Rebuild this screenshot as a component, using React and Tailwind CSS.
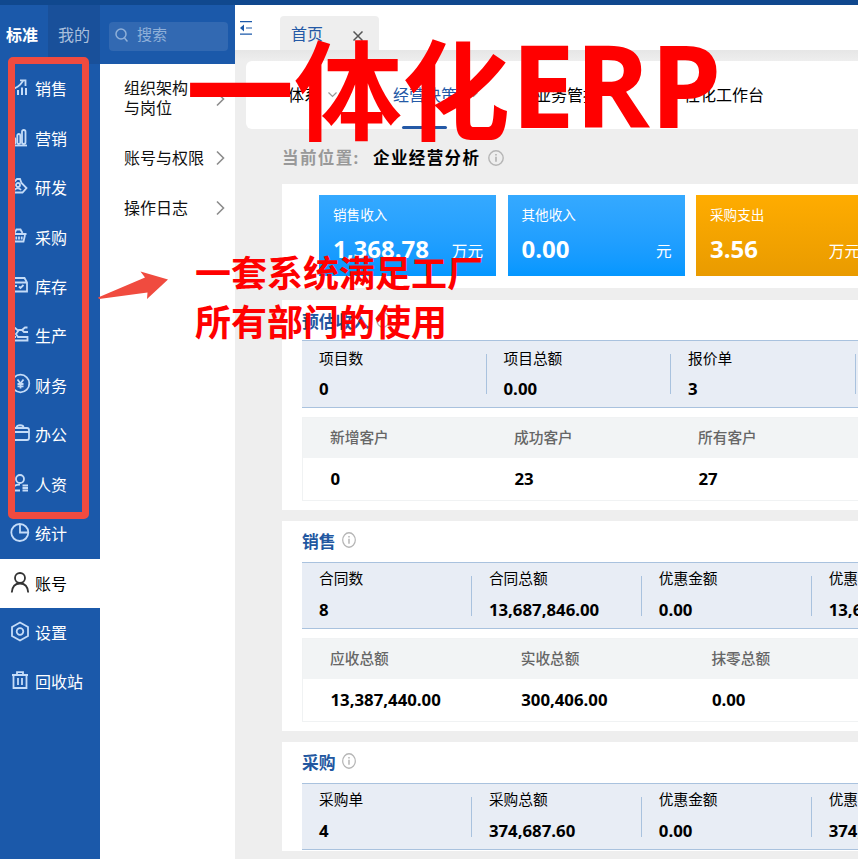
import React from 'react';

const icons = {
  sales: <><path d="M1 11c4-.5 8-3.500 11-8M9 2.300h5.500V8" /><path d="M3 17v-3M7 17v-5M11 17V9.500M15 17v-7" strokeWidth="2" /></>,
  market: <><path d="M0 17.500h16" /><rect x="2" y="10" width="2.500" height="6" rx="1.200" /><rect x="6.300" y="6" width="3" height="10" rx="1.500" /><rect x="11" y="2" width="3.500" height="14" rx="1.700" /></>,
  research: <><path d="M3 12V5l3-3h3l1.500 4 5 5-4 4.500H2" /><circle cx="7" cy="8" r="2" /><path d="M3 14c1-3 5-3.500 7-1" /></>,
  purchase: <><path d="M0 7h15.500M3.500 6l2-3.500h4l2 3.500M2 8l1.500 6.500h9L14 8" /><path d="M5.300 9.500v3M8 9.500v3M10.700 9.500v3" /></>,
  stock: <><path d="M1 6.500 3.500 2h10l2.500 4.500v9H1zM1 6.500h15" /><path d="m8 10.500 1.500 1.500 3-3M3.500 10H6" /></>,
  make: <><path d="M1 15.500h15.500V12H7L5 9l3-4h3l2 2h4M16.500 2.500H14l-3 2.500M1 3h3l3 2.500M1 12h4" /></>,
  finance: <><circle cx="9.500" cy="8.500" r="8.800" /><path d="m6.500 4.500 3 4 3-4M9.500 8.500v5M6.500 9h6M6.500 11.300h6" /></>,
  office: <><rect x="1" y="4" width="17" height="12" rx="2" /><path d="M5.500 3.500c0-3 7-3 7 0M1 8h17" /></>,
  people: <><circle cx="9" cy="5" r="4" /><path d="M1 16.500c.5-4 3-6 8-6M1 16.500h8M11.500 11.500H17M11.500 14H17M11.500 16.500H17" /></>,
  stats: <><circle cx="8.800" cy="9.500" r="8.500" /><path d="M9 1v8.500h8" /></>,
  account: <><circle cx="9" cy="5" r="5" /><path d="M.8 19.500c.4-6 3.200-9 8.200-9s7.800 3 8.200 9" /></>,
  settings: <><path d="m9 .5 8 4.500v9l-8 4.500L1 14V5z" /><circle cx="9" cy="9.500" r="3.300" /></>,
  trash: <><path d="M1 4h16M6 3.500V1.200h6v2.300M2.500 4v13h13V4M7 7v7M11 7v7" /></>,
};

const menu = [
  ['sales', '销售'], ['market', '营销'], ['research', '研发'], ['purchase', '采购'],
  ['stock', '库存'], ['make', '生产'], ['finance', '财务'], ['office', '办公'],
  ['people', '人资'], ['stats', '统计'], ['account', '账号'], ['settings', '设置'], ['trash', '回收站'],
];

function Sidebar() {
  return (
    <nav className="w-[100px] shrink-0 bg-[#1b59aa] pt-[0.5px] text-base text-white">
      {menu.map(([key, label]) => {
        const active = key === 'account';
        return (
          <div key={key} className={`flex h-[49.45px] items-center pl-[11px] ${active ? 'bg-white text-black' : ''}`}>
            <svg width="19" height="20" viewBox="0 0 19 20" fill="none" stroke="currentColor" strokeWidth="1.8" className={`-mt-0.5 shrink-0 overflow-visible ${active ? 'text-[#333]' : 'text-[#c5dcf8]'}`}>{icons[key]}</svg>
            <span className="ml-[5px] leading-6">{label}</span>
          </div>
        );
      })}
    </nav>
  );
}

function Chevron() {
  return (
    <svg width="9" height="16" viewBox="0 0 9 16" fill="none" stroke="#8c8c8c" strokeWidth="1.600" className="shrink-0">
      <path d="m1 1.500 6.500 6.500L1 14.500" />
    </svg>
  );
}

function Caret() {
  return (
    <svg width="9" height="6" viewBox="0 0 9 6" fill="none" stroke="#999" strokeWidth="1.200"><path d="m.5.500 4 4 4-4" /></svg>
  );
}

function Submenu() {
  return (
    <div className="w-[135px] bg-white pl-6 text-base text-[#111]">
      <div className="flex h-[69px] items-center justify-between pr-[10px]">
        <span className="leading-[19.5px]">组织架构<br />与岗位</span><Chevron />
      </div>
      <div className="flex h-[50px] items-center justify-between pr-[10px]"><span className="whitespace-nowrap">账号与权限</span><Chevron /></div>
      <div className="flex h-[50px] items-center justify-between pr-[10px]"><span>操作日志</span><Chevron /></div>
    </div>
  );
}

function Info({ className = '', w = 14 }) {
  return (
    <svg width={w} height="16" viewBox="0 0 16 16" preserveAspectRatio="none" fill="none" stroke="#b5b5b5" strokeWidth="1.400" className={className}>
      <circle cx="8" cy="8" r="7.200" /><path d="M8 6.700v5M8 4v1.500" strokeWidth="1.700" />
    </svg>
  );
}

function Kpi({ label, value, unit, orange }) {
  return (
    <div className={`flex h-[81px] w-[177px] shrink-0 flex-col bg-linear-to-b pl-[14px] pr-[13px] pt-[11px] text-white ${orange ? 'from-[#ffac00] to-[#e99b00]' : 'from-[#35a9ff] to-[#0497ff]'}`}>
      <div className="text-[13.6px] leading-[18px]">{label}</div>
      <div className="mt-[9px] flex items-center justify-between">
        <span className="text-2xl leading-8 font-bold">{value}</span>
        <span className="mt-[3px] text-[15.600px] leading-6">{unit}</span>
      </div>
    </div>
  );
}

function Metrics({ items, wide }) {
  return (
    <div className={`flex border-y border-[#a9c2de] bg-[#e8edf5] ${wide ? 'h-[68px]' : 'h-[67px]'}`}>
      {items.map(([label, value], i) => (
        <div key={i} className={`flex shrink-0 items-center ${wide ? 'w-[184.5px]' : 'w-[169.9px]'}`}>
          <div className={`flex h-[65px] flex-1 flex-col pl-[17px] whitespace-nowrap text-black ${wide ? 'pt-[5px]' : 'pt-1'}`}>
            <span className="text-[14.7px] leading-[22px]">{label}</span>
            <span className={`text-[16.8px] leading-[22px] font-bold ${wide ? 'mt-[9px]' : 'mt-[10px]'}`}>{value}</span>
          </div>
          <div className="h-10 w-px bg-[#a9c2de]" />
        </div>
      ))}
    </div>
  );
}

function Totals({ items, wide }) {
  return (
    <div className="mt-[9px] mr-[-1px] border border-[#f0f2f3]">
      <div className="flex h-10 items-center bg-[#f2f4f5] pl-[27px]">
        {items.map(([label]) => (
          <span key={label} className={`-mt-px shrink-0 text-[14.7px] font-medium text-[#666] ${wide ? 'w-[184px]' : 'w-[190.7px]'}`}>{label}</span>
        ))}
      </div>
      <div className="flex h-[42px] items-center pl-[27.500px]">
        {items.map(([label, value]) => (
          <span key={label} className={`shrink-0 text-[16.8px] font-bold text-black ${wide ? 'w-[184px]' : 'w-[190.7px]'}`}>{value}</span>
        ))}
      </div>
    </div>
  );
}

function Section({ title, metrics, totals, wide, className = '' }) {
  return (
    <section className={`shrink-0 overflow-hidden bg-white pl-5 ${className}`}>
      <h2 className={`flex items-center text-[16.800px] font-bold text-[#2257a0] ${wide ? 'h-10 pt-[3px]' : 'h-[41px] pt-px'}`}>
        {title}<Info className="-mt-1 ml-[6.500px]" />
      </h2>
      <Metrics items={metrics} wide={wide} />
      {totals && <Totals items={totals} wide={wide} />}
    </section>
  );
}

function Main() {
  return (
    <main className="flex min-w-0 flex-1 flex-col overflow-hidden bg-[#eee]">
      <div className="flex h-[45px] shrink-0 items-end bg-white">
        <svg width="12" height="14" viewBox="0 0 12 14" fill="none" stroke="#1b59aa" strokeWidth="1.200" className="mb-[15px] ml-[5px]">
          <path d="M0 .7h12M6 7h6M0 13.200h12" /><path d="m0 7 4-3.500v7z" fill="#1b59aa" stroke="none" />
        </svg>
        <div className="ml-7 flex h-[34px] w-[99px] items-center justify-between rounded-t-sm bg-[#eee] pt-px pr-4 pl-[11px] text-base text-[#2459a6]">
          首页
          <svg width="10" height="10" viewBox="0 0 10 10" stroke="#555" strokeWidth="1.500" className="mt-1"><path d="m.5.500 9 9M9.500.500l-9 9" /></svg>
        </div>
      </div>
      <div className="h-[11px] shrink-0 bg-linear-to-b from-[#e6e6e6] to-[#eee]" />
      <div className="ml-[11px] flex h-[68px] shrink-0 rounded-l-md bg-white pl-[42px] text-base whitespace-nowrap text-black">
        <div className="flex w-[105px] items-center gap-2">体系<Caret /></div>
        <div className="flex w-[142px] flex-col text-[#2459a6]">
          <div className="flex h-[65px] items-center gap-3 pt-[3px]">经营决策<Caret /></div>
          <div className="ml-[9px] h-[3px] w-[45px] rounded-full bg-[#2459a6]" />
        </div>
        <div className="flex w-[133px] items-center gap-2">业务管控<Caret /></div>
        <div className="flex items-center">个性化工作台</div>
      </div>
      <div className="flex h-[55px] shrink-0 items-center pt-[3px] pl-[47px] text-[16.500px] font-bold tracking-[1.4px] whitespace-nowrap">
        <span className="w-[91px] text-[#999]">当前位置:</span>
        <span className="text-black">企业经营分析</span>
        <Info w={16} className="ml-2" />
      </div>
      <div className="ml-[47px] flex h-[104px] shrink-0 gap-[11.5px] bg-white pt-[11px] pl-[37px]">
        <Kpi label="销售收入" value="1,368.78" unit="万元" />
        <Kpi label="其他收入" value="0.00" unit="元" />
        <Kpi label="采购支出" value="3.56" unit="万元" orange />
      </div>
      <div className="mt-3 ml-[47px] flex shrink-0 flex-col gap-[11px]">
        <Section wide className="h-[210px]" title="预估收入" metrics={[['项目数', '0'], ['项目总额', '0.00'], ['报价单', '3'], ['', '']]} totals={[['新增客户', '0'], ['成功客户', '23'], ['所有客户', '27']]} />
        <Section className="h-[210px]" title="销售" metrics={[['合同数', '8'], ['合同总额', '13,687,846.00'], ['优惠金额', '0.00'], ['优惠后金额', '13,687,846.00']]} totals={[['应收总额', '13,387,440.00'], ['实收总额', '300,406.00'], ['抹零总额', '0.00']]} />
        <Section className="h-[109px]" title="采购" metrics={[['采购单', '4'], ['采购总额', '374,687.60'], ['优惠金额', '0.00'], ['优惠后金额', '374,687.60']]} />
      </div>
    </main>
  );
}

export default function App() {
  return (
    <div className="relative flex h-[859px] w-[858px] flex-col overflow-hidden bg-[#eee] font-['Open_Sans','Noto_Sans_CJK_SC',sans-serif]">
      <div className="h-[5px] shrink-0 bg-[#10488e]" />
      <div className="flex min-h-0 flex-1">
        <aside className="flex w-[235px] shrink-0 flex-col">
          <div className="flex h-[59px] shrink-0 bg-[#1b59aa] text-base">
            <div className="flex w-12 items-center pl-[6px] font-bold text-white">标准</div>
            <div className="flex w-[52px] items-center bg-[#19509a] pl-[10px] text-[#a9bfdc]">我的</div>
            <div className="flex flex-1 items-center pl-[9px]">
              <div className="mt-[3px] flex h-[29px] w-[119px] items-center gap-[9px] rounded-sm bg-[#3269b2] pb-[3px] pl-[6px] text-[15px] text-[#8fb0d9]">
                <svg width="13" height="14" viewBox="0 0 13 14" fill="none" stroke="currentColor" strokeWidth="1.500"><circle cx="6" cy="6" r="5" /><path d="m9.500 10 3 3.500" /></svg>
                搜索
              </div>
            </div>
          </div>
          <div className="flex min-h-0 flex-1"><Sidebar /><Submenu /></div>
        </aside>
        <Main />
      </div>
      <div className="absolute top-[57px] left-[8px] h-[462px] w-[81px] rounded-[5px] border-[7px] border-[#f04b3f]" />
      <svg className="absolute top-[270px] left-[96px]" width="74" height="32" viewBox="0 0 74 32" fill="#f04b3f"><path d="M2 27.500 49 7.500l-4.500-6L72 9.500 51 29l.5-6.500L3 29z" /></svg>
      <div className="absolute top-[28px] left-[186px] flex items-baseline leading-[120px] font-bold whitespace-nowrap text-[#ff0000]">
        <span className="text-[108px]">一体化</span><span className="relative -top-[4px] ml-px text-[114px]">ERP</span>
      </div>
      <div className="absolute top-[249px] left-[195px] text-4xl leading-[49px] font-bold whitespace-nowrap text-[#ff0000]">
        一套系统满足工厂<br />所有部门的使用
      </div>
    </div>
  );
}
